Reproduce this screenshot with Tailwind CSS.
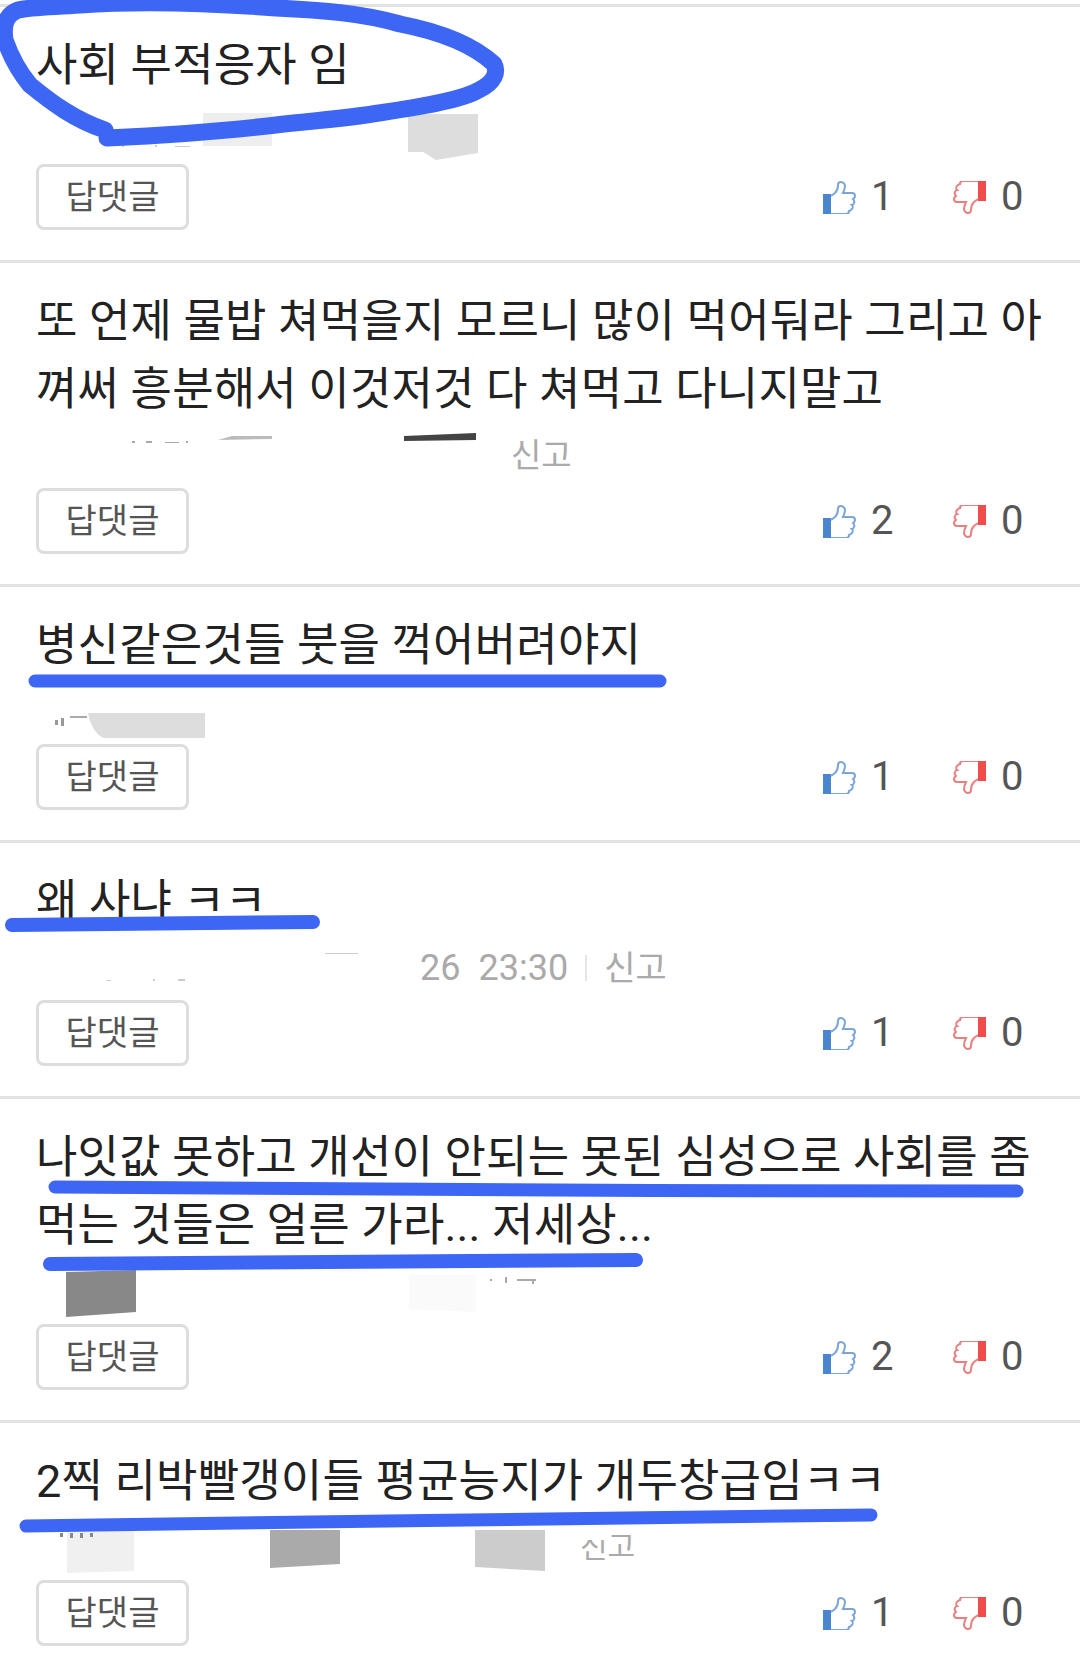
<!DOCTYPE html>
<html lang="ko">

<head>
    <meta charset="UTF-8">
    <title>댓글</title>
    <script src="https://cdn.jsdelivr.net/npm/@tailwindcss/browser@4"></script>
</head>

<body class="bg-white font-['Roboto','Noto_Sans_CJK_KR',sans-serif]">
    <!-- like / dislike icons, reused by every comment -->
    <svg class="absolute w-0 h-0">
        <symbol id="thumb-up" viewBox="0 0 33 33">
            <path d="M0 13h8v20H0z" fill="#4a86d0"/>
            <path d="M8 15l4-3c2-2 3-5 3-8 0-2 1-3 3-3s4 2 4 4c0 3-1 5-2 7h9c2 0 3 1 3 3s-1 2-2 3c1 1 2 2 1 4s-1 2-2 2c1 1 1 3 0 4s-2 2-3 2c0 2-1 3-3 3H8" fill="none" stroke="#7ba5d8" stroke-width="2"/>
        </symbol>
        <symbol id="thumb-down" viewBox="0 0 33 33">
            <g transform="rotate(180 16.5 16.5)">
                <path d="M0 13h8v20H0z" fill="#f04c4c"/>
                <path d="M8 15l4-3c2-2 3-5 3-8 0-2 1-3 3-3s4 2 4 4c0 3-1 5-2 7h9c2 0 3 1 3 3s-1 2-2 3c1 1 2 2 1 4s-1 2-2 2c1 1 1 3 0 4s-2 2-3 2c0 2-1 3-3 3H8" fill="none" stroke="#e88080" stroke-width="2"/>
            </g>
        </symbol>
    </svg>

    <div class="relative w-[1080px] h-[1660px] overflow-hidden pt-[4px]">
        <div class="h-[3px] bg-[#e2e2e2]"></div>

        <!-- comment 1 -->
        <div class="border-b-[3px] border-[#e2e2e2] pt-[25px] pb-[30px] pl-[36px]">
            <p class="text-[45px] leading-[68px] tracking-[0.2px] text-[#222]">사회 부적응자 임</p>
            <div class="h-[64px]"></div>
            <div class="flex justify-between items-center">
                <button class="w-[153px] h-[66px] border-[3px] border-[#ddd] rounded-[8px] text-[34px] text-[#555]">답댓글</button>
                <div class="flex items-center">
                    <div class="flex items-center gap-[15px] w-[130px]">
                        <svg class="w-[33px] h-[33px]"><use href="#thumb-up"/></svg>
                        <span class="text-[40px] text-[#555]">1</span>
                    </div>
                    <div class="flex items-center gap-[15px] w-[127px]">
                        <svg class="w-[33px] h-[33px]"><use href="#thumb-down"/></svg>
                        <span class="text-[40px] text-[#555]">0</span>
                    </div>
                </div>
            </div>
        </div>

        <!-- comment 2 -->
        <div class="border-b-[3px] border-[#e2e2e2] pt-[25px] pb-[30px] pl-[36px]">
            <p class="text-[45px] leading-[68px] tracking-[0.2px] text-[#222] whitespace-nowrap">또 언제 물밥 쳐먹을지 모르니 많이 먹어둬라 그리고 아<br>껴써 흥분해서 이것저것 다 쳐먹고 다니지말고</p>
            <div class="h-[64px] flex items-center pl-[475px] text-[33px] text-[#aaa]">신고</div>
            <div class="flex justify-between items-center">
                <button class="w-[153px] h-[66px] border-[3px] border-[#ddd] rounded-[8px] text-[34px] text-[#555]">답댓글</button>
                <div class="flex items-center">
                    <div class="flex items-center gap-[15px] w-[130px]">
                        <svg class="w-[33px] h-[33px]"><use href="#thumb-up"/></svg>
                        <span class="text-[40px] text-[#555]">2</span>
                    </div>
                    <div class="flex items-center gap-[15px] w-[127px]">
                        <svg class="w-[33px] h-[33px]"><use href="#thumb-down"/></svg>
                        <span class="text-[40px] text-[#555]">0</span>
                    </div>
                </div>
            </div>
        </div>

        <!-- comment 3 -->
        <div class="border-b-[3px] border-[#e2e2e2] pt-[25px] pb-[30px] pl-[36px]">
            <p class="text-[45px] leading-[68px] tracking-[0.2px] text-[#222]">병신같은것들 붓을 꺽어버려야지</p>
            <div class="h-[64px]"></div>
            <div class="flex justify-between items-center">
                <button class="w-[153px] h-[66px] border-[3px] border-[#ddd] rounded-[8px] text-[34px] text-[#555]">답댓글</button>
                <div class="flex items-center">
                    <div class="flex items-center gap-[15px] w-[130px]">
                        <svg class="w-[33px] h-[33px]"><use href="#thumb-up"/></svg>
                        <span class="text-[40px] text-[#555]">1</span>
                    </div>
                    <div class="flex items-center gap-[15px] w-[127px]">
                        <svg class="w-[33px] h-[33px]"><use href="#thumb-down"/></svg>
                        <span class="text-[40px] text-[#555]">0</span>
                    </div>
                </div>
            </div>
        </div>

        <!-- comment 4 -->
        <div class="border-b-[3px] border-[#e2e2e2] pt-[25px] pb-[30px] pl-[36px]">
            <p class="text-[45px] leading-[68px] tracking-[0.2px] text-[#222]">왜 사냐 ㅋㅋ</p>
            <div class="h-[64px] flex items-center pl-[384px] text-[34px] text-[#aaa]">
                <span class="text-[36px]">26</span>
                <span class="text-[36px] ml-[18px]">23:30</span>
                <span class="w-[2px] h-[26px] bg-[#e5e5e5] mx-[17px]"></span>
                <span>신고</span>
            </div>
            <div class="flex justify-between items-center">
                <button class="w-[153px] h-[66px] border-[3px] border-[#ddd] rounded-[8px] text-[34px] text-[#555]">답댓글</button>
                <div class="flex items-center">
                    <div class="flex items-center gap-[15px] w-[130px]">
                        <svg class="w-[33px] h-[33px]"><use href="#thumb-up"/></svg>
                        <span class="text-[40px] text-[#555]">1</span>
                    </div>
                    <div class="flex items-center gap-[15px] w-[127px]">
                        <svg class="w-[33px] h-[33px]"><use href="#thumb-down"/></svg>
                        <span class="text-[40px] text-[#555]">0</span>
                    </div>
                </div>
            </div>
        </div>

        <!-- comment 5 -->
        <div class="border-b-[3px] border-[#e2e2e2] pt-[25px] pb-[30px] pl-[36px]">
            <p class="text-[45px] leading-[68px] tracking-[0.2px] text-[#222] whitespace-nowrap">나잇값 못하고 개선이 안되는 못된 심성으로 사회를 좀<br>먹는 것들은 얼른 가라... 저세상...</p>
            <div class="h-[64px]"></div>
            <div class="flex justify-between items-center">
                <button class="w-[153px] h-[66px] border-[3px] border-[#ddd] rounded-[8px] text-[34px] text-[#555]">답댓글</button>
                <div class="flex items-center">
                    <div class="flex items-center gap-[15px] w-[130px]">
                        <svg class="w-[33px] h-[33px]"><use href="#thumb-up"/></svg>
                        <span class="text-[40px] text-[#555]">2</span>
                    </div>
                    <div class="flex items-center gap-[15px] w-[127px]">
                        <svg class="w-[33px] h-[33px]"><use href="#thumb-down"/></svg>
                        <span class="text-[40px] text-[#555]">0</span>
                    </div>
                </div>
            </div>
        </div>

        <!-- comment 6 -->
        <div class="pt-[25px] pl-[36px]">
            <p class="text-[45px] leading-[68px] tracking-[0.2px] text-[#222]">2찍 리박빨갱이들 평균능지가 개두창급임ㅋㅋ</p>
            <div class="h-[64px] flex items-center pl-[544px] pb-[4px] text-[30px] text-[#aaa]">신고</div>
            <div class="flex justify-between items-center">
                <button class="w-[153px] h-[66px] border-[3px] border-[#ddd] rounded-[8px] text-[34px] text-[#555]">답댓글</button>
                <div class="flex items-center">
                    <div class="flex items-center gap-[15px] w-[130px]">
                        <svg class="w-[33px] h-[33px]"><use href="#thumb-up"/></svg>
                        <span class="text-[40px] text-[#555]">1</span>
                    </div>
                    <div class="flex items-center gap-[15px] w-[127px]">
                        <svg class="w-[33px] h-[33px]"><use href="#thumb-down"/></svg>
                        <span class="text-[40px] text-[#555]">0</span>
                    </div>
                </div>
            </div>
        </div>

        <!-- redaction smears and marker pen scribbled over the screenshot -->
        <svg class="absolute inset-0 pointer-events-none" width="1080" height="1660" viewBox="0 0 1080 1660">
            <path d="M203 113h69v33h-69z" fill="#eee"/>
            <path d="M408 114h70v39l-42 7-13-8h-15z" fill="#ddd"/>
            <path d="M122 145h2v2h-2zM155 145h2v2h-2zM175 146h15v1h-15z" fill="#ccc"/>
            <path d="M218 440l14-4h40v3z" fill="#bbb"/>
            <path d="M404 436l72-3v7l-72 1z" fill="#444"/>
            <path d="M132 441h3v2h-3zM146 441h6v2h-6zM165 442h14v1h-14zM186 441h2v2h-2z" fill="#aaa"/>
            <path d="M88 713h117v25H104c-8-2-14-14-16-25z" fill="#ddd"/>
            <path d="M55 720h3v5h-3zM61 718h3v8h-3z" fill="#999"/>
            <path d="M70 716h17v2H70z" fill="#aaa"/>
            <path d="M325 953h33v1h-33zM107 980h4v1h-4zM153 979h2v2h-2zM178 979h7v2h-7z" fill="#ccc"/>
            <path d="M66 1272l70-2v42l-70 5z" fill="#888"/>
            <path d="M409 1275h67v37l-67-3z" fill="#fafafa"/>
            <path d="M490 1279h2v2h-2zM505 1277h2v6h-2zM517 1279h19v2h-2v3h-2v-3h-15z" fill="#aaa"/>
            <path d="M67 1530h67v41l-67 2z" fill="#f0f0f0"/>
            <path d="M270 1530h70v34l-70 4z" fill="#aaa"/>
            <path d="M475 1530h70v41l-70-4z" fill="#ccc"/>
            <path d="M575 1520h32v20h-32z" fill="#fff"/>
            <path d="M60 1533h3v4h-3zM70 1533h3v5h-3zM80 1533h3v5h-3zM90 1533h3v4h-3z" fill="#888"/>
            <g fill="none" stroke="#3d66f5" stroke-linecap="round" stroke-linejoin="round">
                <path stroke-width="17" d="M107 138C150 136 207 133 276 125 320 120 350 118 379 113 420 107 462 100 479 90 495 82 498 72 494 64 470 42 431 30 400 24 362 13 320 10 276 8 210 3 138 1 80 5 50 7 30 7 18 10 5 15 3 26 5 40 12 60 20 73 30 85 52 103 75 120 105 130"/>
                <path stroke-width="13" d="M35 681H660"/>
                <path stroke-width="14" d="M12 925C120 924 220 923 313 922"/>
                <path stroke-width="13" d="M55 1187C350 1190 700 1191 1017 1191"/>
                <path stroke-width="14" d="M50 1264C250 1263 450 1261 636 1260"/>
                <path stroke-width="13" d="M26 1526C300 1522 600 1518 871 1515"/>
            </g>
        </svg>
    </div>
</body>

</html>
